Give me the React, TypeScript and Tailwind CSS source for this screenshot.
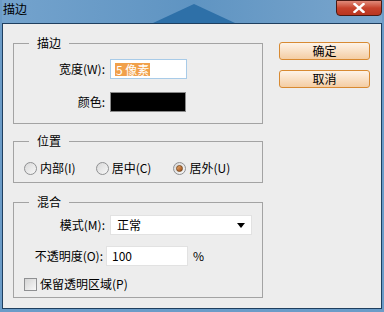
import React from "react";

const font = { fontFamily: '"Noto Sans CJK SC", "Liberation Sans", sans-serif' };

function Radio({ checked }: { checked?: boolean }) {
  return (
    <span className="flex h-[13px] w-[13px] items-center justify-center rounded-full border border-[#8f9092] bg-gradient-to-br from-[#d8d8d8] to-[#f8f8f8]">
      {checked && (
        <span className="h-[7px] w-[7px] rounded-full bg-gradient-to-br from-[#f0b070] to-[#9a4a10] border border-[#7a4a20]" />
      )}
    </span>
  );
}

function Button({ label }: { label: string }) {
  return (
    <button className="flex h-[18px] w-[91px] items-center justify-center rounded-[3px] border border-[#d88a32] bg-gradient-to-b from-[#fdf3e8] to-[#f4cda3] text-[12px] leading-none text-black">
      {label}
    </button>
  );
}

export default function App() {
  return (
    <div
      className="flex h-[312px] w-[384px] flex-col bg-[#6b9cc8] px-[2px] pb-[3px] text-[12px] text-black"
      style={font}
    >
      <div className="relative flex h-[23px] shrink-0 items-start bg-gradient-to-r from-[#74a3cd] via-[#5f94c2] to-[#7aa6cd]">
        <svg className="absolute left-[151px] top-[4px]" width="82" height="19" viewBox="0 0 82 19">
          <polygon points="41,0 0,19 82,19" fill="#2e70a8" />
        </svg>
        <span className="relative ml-[1px] mt-[2px] text-[12px] leading-[14px] text-black">描边</span>
        <div className="relative ml-auto flex h-[16px] w-[46px] items-center justify-center rounded-b-[4px] border border-[#4a1a14] bg-gradient-to-b from-[#e08a7a] via-[#c7422c] to-[#b83520]">
          <svg width="12" height="10" viewBox="0 0 12 10">
            <path d="M1.5 1 L10.5 9 M10.5 1 L1.5 9" stroke="#fff" strokeWidth="2.4" strokeLinecap="square" />
          </svg>
        </div>
      </div>

      <div className="flex flex-1 border border-[#1f3f5f] bg-[#ededed]">
        <div className="ml-[10px] flex w-[250px] flex-col">
          <fieldset className="mt-[11px] h-[89px] border border-[#a3a3a3] px-0">
            <legend className="ml-[15px] px-[8px] leading-[16px]">描边</legend>
            <div className="mt-[8px] flex h-[20px] items-center">
              <span className="w-[91px] text-right">宽度(W):</span>
              <div className="ml-[5px] flex h-[20px] w-[77px] items-center border border-[#a8cbe8] bg-white pl-[4px]">
                <span className="bg-[#f1a04a] px-[1px] leading-[13px] text-white">5 像素</span>
              </div>
            </div>
            <div className="mt-[13px] flex h-[20px] items-center">
              <span className="w-[91px] text-right">颜色:</span>
              <div className="ml-[5px] h-[20px] w-[76px] border border-[#8a8a8a] bg-black" />
            </div>
          </fieldset>

          <fieldset className="mt-[9px] h-[50px] border border-[#a3a3a3] px-0">
            <legend className="ml-[15px] px-[8px] leading-[16px]">位置</legend>
            <div className="mt-[12px] flex h-[14px] items-center">
              <span className="ml-[10px]"><Radio /></span>
              <span className="ml-[3px]">内部(I)</span>
              <span className="ml-[20px]"><Radio /></span>
              <span className="ml-[3px]">居中(C)</span>
              <span className="ml-[22px]"><Radio checked /></span>
              <span className="ml-[3px]">居外(U)</span>
            </div>
          </fieldset>

          <fieldset className="mt-[11px] h-[104px] border border-[#a3a3a3] px-0">
            <legend className="ml-[15px] px-[8px] leading-[16px]">混合</legend>
            <div className="mt-[5px] flex h-[20px] items-center">
              <span className="w-[91px] text-right">模式(M):</span>
              <div className="ml-[5px] flex h-[20px] w-[142px] items-center justify-between border border-[#e2e2e2] bg-white pl-[6px] pr-[6px]">
                <span>正常</span>
                <svg width="8" height="5" viewBox="0 0 8 5">
                  <polygon points="0,0 8,0 4,5" fill="#000" />
                </svg>
              </div>
            </div>
            <div className="mt-[11px] flex h-[20px] items-center">
              <span className="w-[89px] text-right">不透明度(O):</span>
              <div className="ml-[3px] flex h-[20px] w-[82px] items-center border border-[#e2e2e2] bg-white pl-[5px]">
                100
              </div>
              <span className="ml-[5px]">%</span>
            </div>
            <div className="mt-[11px] flex h-[14px] items-center">
              <span className="ml-[10px] h-[13px] w-[13px] border border-[#8f9092] bg-gradient-to-br from-[#d4d4d4] to-[#f8f8f8]" />
              <span className="ml-[3px]">保留透明区域(P)</span>
            </div>
          </fieldset>
        </div>

        <div className="ml-[16px] mt-[18px] flex flex-col gap-[10px]">
          <Button label="确定" />
          <Button label="取消" />
        </div>
      </div>
    </div>
  );
}
